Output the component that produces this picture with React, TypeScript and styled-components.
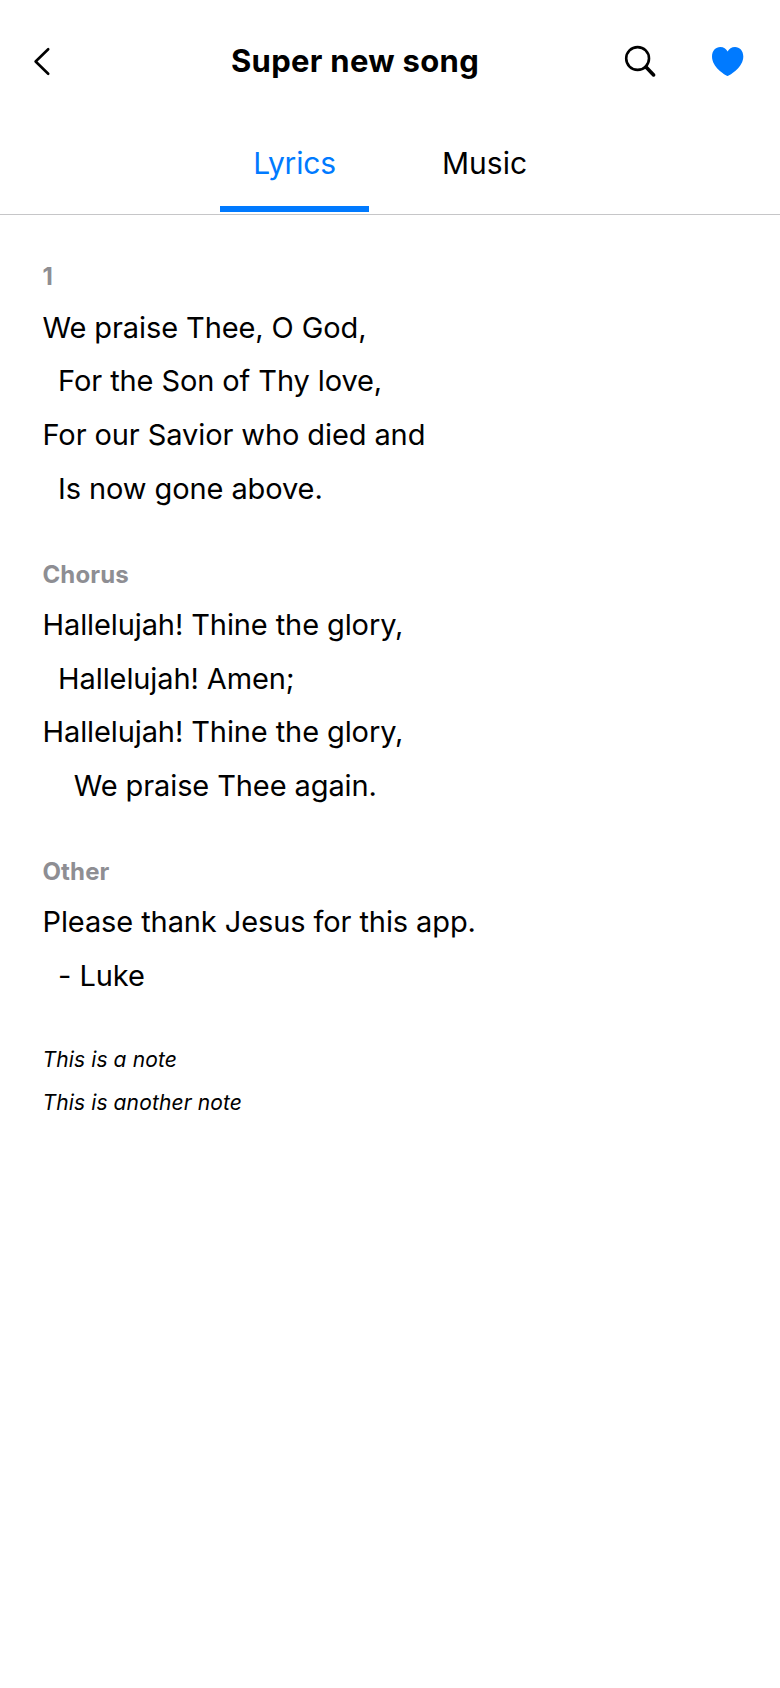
import React from "react";
import styled, { createGlobalStyle } from "styled-components";

const GlobalStyle = createGlobalStyle`
  * { box-sizing: border-box; }
  body {
    margin: 0;
    background: #fff;
    color: #000;
    font-family: Inter, "Liberation Sans", sans-serif;
  }
`;

const Screen = styled.div`
  display: flex;
  flex-direction: column;
  width: 780px;
  min-height: 1688px;
  background: #fff;
`;

const Header = styled.header`
  display: flex;
  align-items: center;
  justify-content: space-between;
  height: 124px;
  padding: 0 22px 0 11px;
`;

const Actions = styled.div`
  display: flex;
  gap: 22px;
`;

const IconButton = styled.button`
  display: flex;
  flex: none;
  align-items: center;
  justify-content: center;
  width: 64px;
  height: 64px;
  padding: 0;
  border: 0;
  background: none;
  color: inherit;
`;

const Title = styled.h1`
  flex: 1;
  margin: 0;
  padding: 0 0 2px 156px;
  font-size: 31px;
  font-weight: 650;
  line-height: 40px;
  letter-spacing: 0.3px;
  white-space: nowrap;
`;

const Tabs = styled.nav`
  display: flex;
  justify-content: center;
  gap: 40px;
  height: 91px;
  border-bottom: 1px solid #c6c6c8;
`;

const Tab = styled.button<{ $active?: boolean; $tracking: number }>`
  width: ${(p) => (p.$active ? 149 : 151)}px;
  height: 88px;
  padding: 0 0 5px;
  border: 0;
  border-bottom: 6px solid ${(p) => (p.$active ? "#007aff" : "transparent")};
  background: none;
  color: ${(p) => (p.$active ? "#007aff" : "#000")};
  font: 400 30px/40px Inter, "Liberation Sans", sans-serif;
  letter-spacing: ${(p) => p.$tracking}px;
`;

const Song = styled.main`
  padding: 47.3px 42.5px 0;
`;

const Stanza = styled.section`
  & + & {
    margin-top: 44.4px;
  }
`;

const StanzaLabel = styled.h2`
  margin: 0 0 8.5px;
  color: #8e8e93;
  font-size: 24px;
  font-weight: 650;
  line-height: 30px;
  letter-spacing: 0.12px;
`;

const Line = styled.p<{ $indent: number }>`
  margin: 0;
  padding-left: ${(p) => p.$indent * 15.6}px;
  font-size: 29px;
  line-height: 53.6px;
  letter-spacing: -0.1px;
  white-space: nowrap;
`;

const Notes = styled.footer`
  margin-top: 35.5px;
`;

const Note = styled.p`
  margin: 0;
  font-size: 21px;
  font-style: italic;
  line-height: 43px;
  letter-spacing: 0.12px;
`;

type Verse = { label: string; lines: [string, number][] };

const verses: Verse[] = [
  {
    label: "1",
    lines: [
      ["We praise Thee, O God,", 0],
      ["For the Son of Thy love,", 1],
      ["For our Savior who died and", 0],
      ["Is now gone above.", 1],
    ],
  },
  {
    label: "Chorus",
    lines: [
      ["Hallelujah! Thine the glory,", 0],
      ["Hallelujah! Amen;", 1],
      ["Hallelujah! Thine the glory,", 0],
      ["We praise Thee again.", 2],
    ],
  },
  {
    label: "Other",
    lines: [
      ["Please thank Jesus for this app.", 0],
      ["- Luke", 1],
    ],
  },
];

const notes = ["This is a note", "This is another note"];

const BackIcon = () => (
  <svg width="34" height="44" viewBox="0 0 34 44" fill="none" stroke="currentColor">
    <path d="M22.2 9.2 9.6 21.5 22.2 33.8" strokeWidth="2.6" strokeLinecap="round" strokeLinejoin="round" />
  </svg>
);

const SearchIcon = () => (
  <svg width="48" height="48" viewBox="0 0 48 48" fill="none" stroke="currentColor">
    <circle cx="21.6" cy="20.5" r="11.4" strokeWidth="2.6" />
    <path d="M30 28.9 37.6 36.9" strokeWidth="3.6" strokeLinecap="round" />
  </svg>
);

const HeartIcon = () => (
  <svg width="52" height="44" viewBox="0 0 52 44" fill="#007aff">
    <path d="M27.6 36C24.5 34.6 12 27 12 16.4C12 10.8 15.7 7 20.3 7C23.7 7 26.2 8.8 27.6 11.5C29 8.8 31.6 7 35 7C39.6 7 43.3 10.8 43.3 16.4C43.3 27 30.7 34.6 27.6 36Z" />
  </svg>
);

export default function App() {
  return (
    <Screen>
      <GlobalStyle />
      <Header>
        <IconButton aria-label="Back">
          <BackIcon />
        </IconButton>
        <Title>Super new song</Title>
        <Actions>
          <IconButton aria-label="Search">
            <SearchIcon />
          </IconButton>
          <IconButton aria-label="Favorite">
            <HeartIcon />
          </IconButton>
        </Actions>
      </Header>
      <Tabs>
        <Tab $active $tracking={-0.19}>Lyrics</Tab>
        <Tab $tracking={0}>Music</Tab>
      </Tabs>
      <Song>
        {verses.map((verse) => (
          <Stanza key={verse.label}>
            <StanzaLabel>{verse.label}</StanzaLabel>
            {verse.lines.map(([text, indent], i) => (
              <Line key={i} $indent={indent}>{text}</Line>
            ))}
          </Stanza>
        ))}
        <Notes>
          {notes.map((note) => (
            <Note key={note}>{note}</Note>
          ))}
        </Notes>
      </Song>
    </Screen>
  );
}
